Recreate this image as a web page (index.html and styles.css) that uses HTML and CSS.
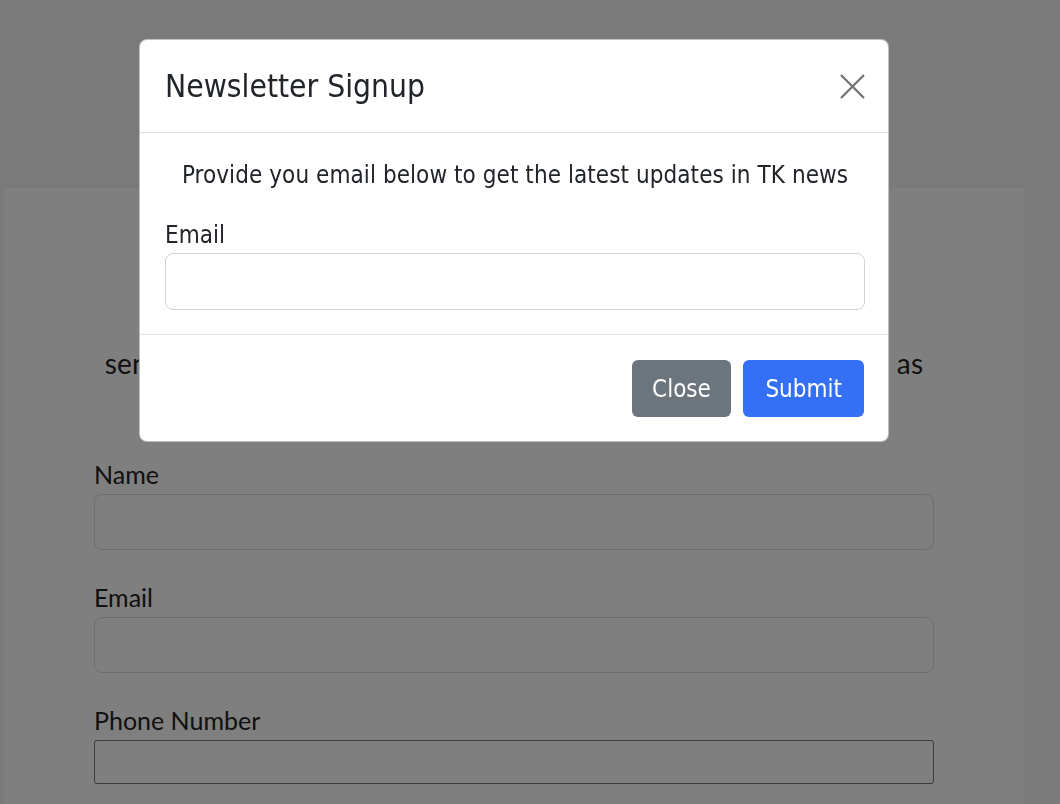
FILE: index.html
```html
<!DOCTYPE html>
<html lang="en">
<head>
<meta charset="utf-8">
<title>Contact</title>
<link rel="stylesheet" href="styles.css">
</head>
<body>
<div class="page">
  <main class="container">
    <p class="intro">send us a message and a member of our team will reply as soon as<br>possible.</p>
    <form class="contact">
      <div class="group">
        <label class="label" for="name">Name</label>
        <input class="field" id="name" type="text">
      </div>
      <div class="group">
        <label class="label" for="email">Email</label>
        <input class="field" id="email" type="email">
      </div>
      <div class="group">
        <label class="label" for="phone">Phone Number</label>
        <input class="field phone" id="phone" type="tel">
      </div>
    </form>
  </main>
</div>
<div class="backdrop"></div>
<div class="modal">
  <div class="modal-header">
    <h5 class="modal-title">Newsletter Signup</h5>
    <button class="btn-close" type="button" aria-label="Close">
      <svg width="25" height="25" viewBox="0 0 25 25"><path d="M1 1L24 24M24 1L1 24" stroke="#707070" stroke-width="2.2" fill="none"/></svg>
    </button>
  </div>
  <div class="modal-body">
    <p class="modal-text">Provide you email below to get the latest updates in TK news</p>
    <label class="modal-label" for="nl-email">Email</label>
    <input class="modal-field" id="nl-email" type="email">
  </div>
  <div class="modal-footer">
    <button class="btn btn-secondary" type="button">Close</button>
    <button class="btn btn-primary" type="button">Submit</button>
  </div>
</div>
</body>
</html>
```
FILE: styles.css
```css
html, body {
  margin: 0;
  padding: 0;
  overflow: hidden;
  height: 100%;
}
body {
  background: #f4f4f4;
  font-family: Lato, "Noto Sans", sans-serif;
  color: #222;
}
.page {
  padding-top: 188px;
}
.container {
  margin: 0 36px 0 4px;
  background: #fff;
  padding: 153px 90px 60px;
  min-height: 700px;
}
.intro {
  margin: 0 0 25px;
  text-align: center;
  font-size: 28px;
  line-height: 45px;
  letter-spacing: 0.19px;
  white-space: nowrap;
}
.group {
  margin-bottom: 29px;
}
.label {
  display: block;
  font-size: 25px;
  line-height: 36px;
  margin-bottom: 2px;
}
.field {
  display: block;
  box-sizing: border-box;
  width: 100%;
  height: 56px;
  border: 1px solid #dcdcdc;
  border-radius: 8px;
  background: #fff;
}
.field.phone {
  height: 44px;
  border-color: #777;
  border-radius: 3px;
}
.backdrop {
  position: fixed;
  inset: 0;
  background: rgba(0, 0, 0, 0.5);
}
.modal {
  position: absolute;
  left: 139px;
  top: 39px;
  width: 750px;
  box-sizing: border-box;
  background: #fff;
  border: 1px solid rgba(0, 0, 0, 0.25);
  border-radius: 8px;
  font-family: "DejaVu Sans Condensed", "Liberation Sans Narrow", sans-serif;
  color: #212529;
}
.modal-header {
  height: 93px;
  box-sizing: border-box;
  padding: 0 23px 0 25px;
  display: flex;
  align-items: center;
  justify-content: space-between;
  border-bottom: 1px solid #dee2e6;
}
.modal-title {
  margin: 0;
  font-size: 31.5px;
  font-weight: 400;
  line-height: 36px;
}
.btn-close {
  border: 0;
  background: none;
  padding: 0;
  width: 25px;
  height: 25px;
  display: flex;
}
.modal-body {
  padding: 24px 23px 24px 25px;
}
.modal-text {
  margin: 0 0 24px;
  text-align: center;
  font-size: 24px;
  line-height: 36px;
  letter-spacing: 0.07px;
}
.modal-label {
  display: block;
  font-size: 24px;
  line-height: 36px;
}
.modal-field {
  display: block;
  box-sizing: border-box;
  width: 100%;
  height: 57px;
  border: 1px solid #ced4da;
  border-radius: 8px;
}
.modal-footer {
  display: flex;
  justify-content: flex-end;
  gap: 12px;
  padding: 25px 24px 24px;
  border-top: 1px solid #dee2e6;
}
.btn {
  height: 57px;
  border: 0;
  border-radius: 6px;
  font-family: inherit;
  font-size: 24px;
  color: #fff;
}
.btn-secondary {
  background: #6c757d;
  padding: 0 20.5px;
}
.btn-primary {
  background: #3370f5;
  padding: 0 22px;
}
```
